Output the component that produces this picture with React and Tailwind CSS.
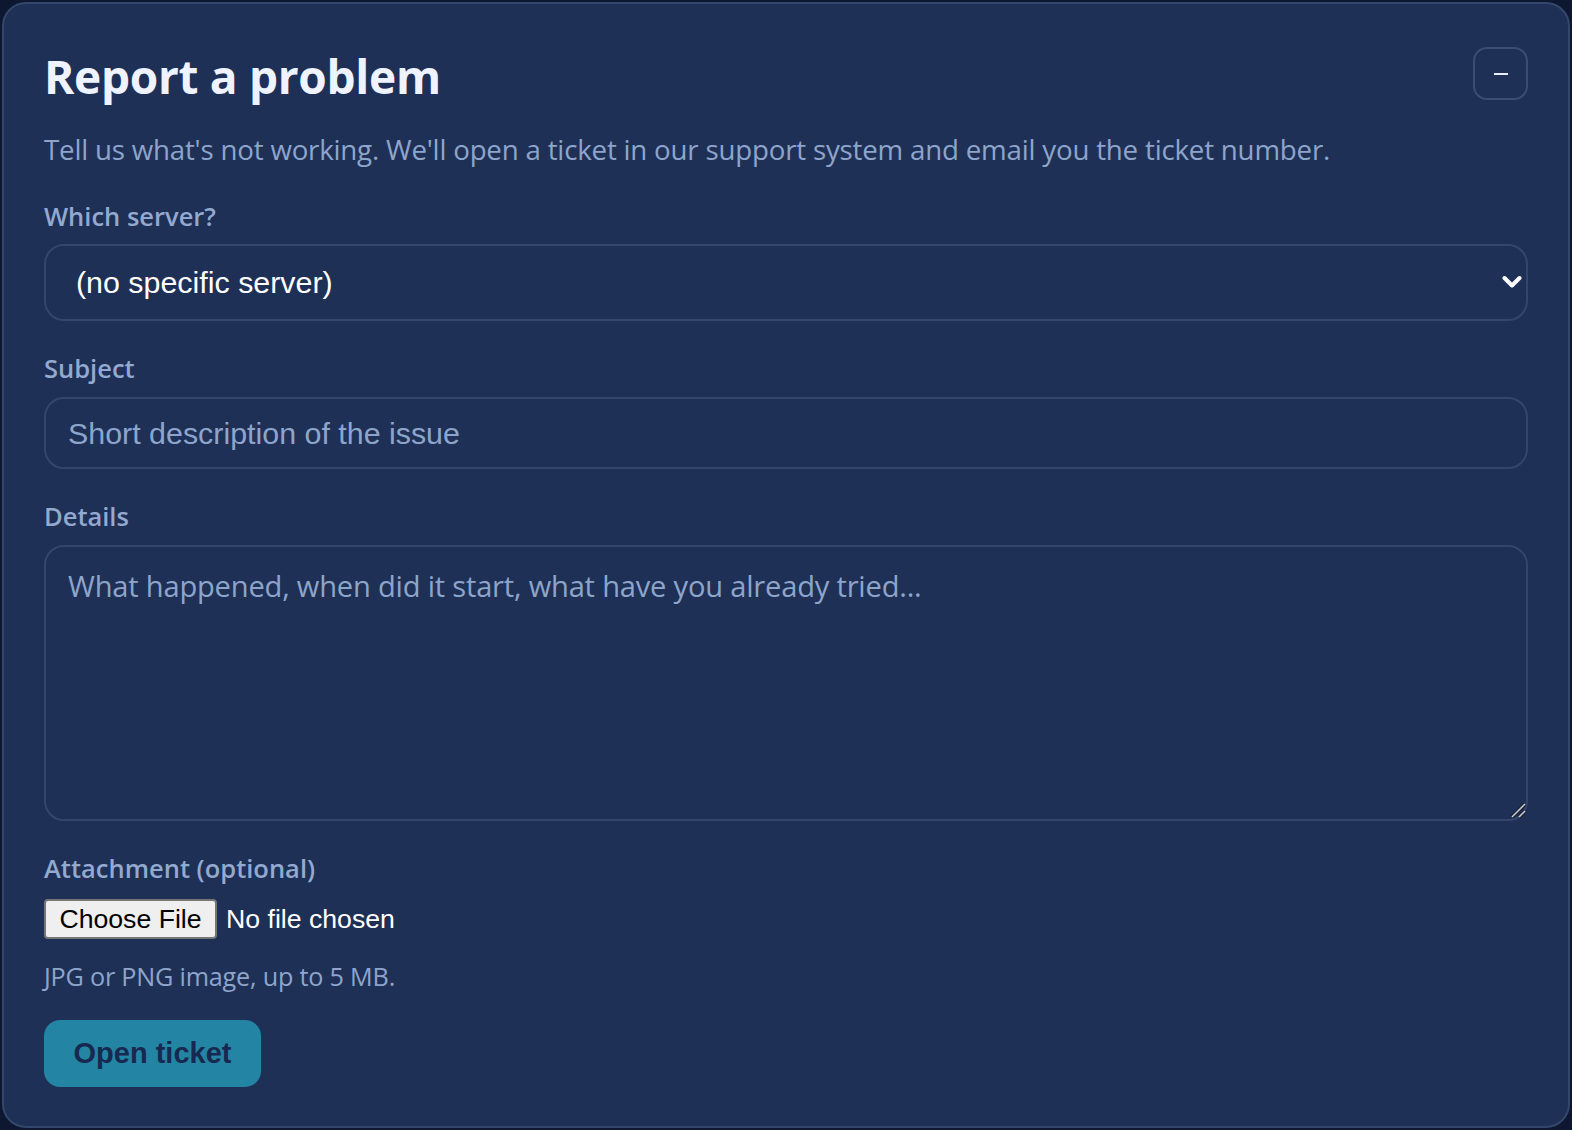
import React from "react";

const SANS = "font-['Open_Sans','Noto_Sans',sans-serif]";
const ARIAL = "font-['Liberation_Sans',Arial,sans-serif]";

function Label({ children, className = "" }) {
  return (
    <div className={`${SANS} text-[25.5px] leading-[36px] font-semibold text-[#93a9cf] ${className}`}>
      {children}
    </div>
  );
}

export default function App() {
  return (
    <div className="w-[1572px] h-[1130px] bg-[#0d1830] pt-[2px] pl-[2px]">
      <div className="w-[1568px] h-[1126px] bg-[#1e3056] border-2 border-[#33466b] rounded-[24px] px-[40px] pt-[40px]">
        <div className="flex items-start justify-between">
          <h1 className={`${SANS} text-[46px] leading-[64px] font-bold text-[#eef3ff] tracking-[-0.3px]`}>
            Report a problem
          </h1>
          <button className="mt-[3px] w-[55px] h-[53px] border-2 border-[#3a4d72] rounded-[14px] flex items-center justify-center">
            <span className="block w-[14px] h-[2px] bg-[#e8eefc]" />
          </button>
        </div>
        <p className={`${SANS} mt-[21px] text-[27.7px] leading-[40px] text-[#8ea5cb] tracking-[-0.2px]`}>
          Tell us what's not working. We'll open a ticket in our support system and email you the ticket number.
        </p>

        <Label className="mt-[29px]">Which server?</Label>
        <div className="relative mt-[10px] w-full h-[77px] border-2 border-[#33466b] rounded-[20px] flex items-center pl-[30px]">
          <span className={`${ARIAL} text-[30.4px] text-white`}>(no specific server)</span>
          <svg className="absolute right-[4px] top-[29px]" width="20" height="14" viewBox="0 0 20 14">
            <path d="M2.5 3 L10 10.5 L17.5 3" fill="none" stroke="#ffffff" strokeWidth="4" strokeLinecap="round" strokeLinejoin="round" />
          </svg>
        </div>

        <Label className="mt-[29px]">Subject</Label>
        <input
          className={`${ARIAL} mt-[11px] block w-full h-[72px] border-2 border-[#33466b] rounded-[20px] bg-transparent pl-[22px] text-[30.4px] text-white placeholder:text-[#8ea5cb] outline-none`}
          placeholder="Short description of the issue"
        />

        <Label className="mt-[29px]">Details</Label>
        <div className="relative mt-[11px] w-full h-[276px]">
          <textarea
            className={`${SANS} block w-full h-full border-2 border-[#33466b] rounded-[20px] bg-transparent px-[22px] pt-[19px] text-[29.1px] leading-[40px] text-white placeholder:text-[#8ea5cb] outline-none resize-none tracking-[-0.2px]`}
            placeholder="What happened, when did it start, what have you already tried..."
          />
          <svg className="absolute right-[1px] bottom-[2px]" width="17" height="17" viewBox="0 0 17 17">
            <path d="M2 15 L15 2" stroke="#1a1f2e" strokeWidth="3.5" />
            <path d="M2 15 L15 2" stroke="#c8ccd6" strokeWidth="1.6" />
            <path d="M9 15 L15 9" stroke="#1a1f2e" strokeWidth="3.5" />
            <path d="M9 15 L15 9" stroke="#c8ccd6" strokeWidth="1.6" />
          </svg>
        </div>

        <Label className="mt-[29px]">Attachment (optional)</Label>
        <div className="mt-[13px] flex items-center">
          <span className={`${ARIAL} h-[40px] w-[173px] flex items-center justify-center bg-[#efefef] border-2 border-[#767676] rounded-[4px] text-[26.67px] text-black`}>
            Choose File
          </span>
          <span className={`${ARIAL} ml-[9px] text-[26.67px] text-white`}>No file chosen</span>
        </div>

        <p className={`${SANS} mt-[19px] text-[25.2px] leading-[36px] text-[#8ea5cb] tracking-[-0.2px]`}>
          JPG or PNG image, up to 5 MB.
        </p>

        <button className={`${ARIAL} mt-[26px] w-[217px] h-[67px] rounded-[16px] bg-[#2384a4] text-[29px] font-bold text-[#17294f] flex items-center justify-center`}>
          Open ticket
        </button>
      </div>
    </div>
  );
}
